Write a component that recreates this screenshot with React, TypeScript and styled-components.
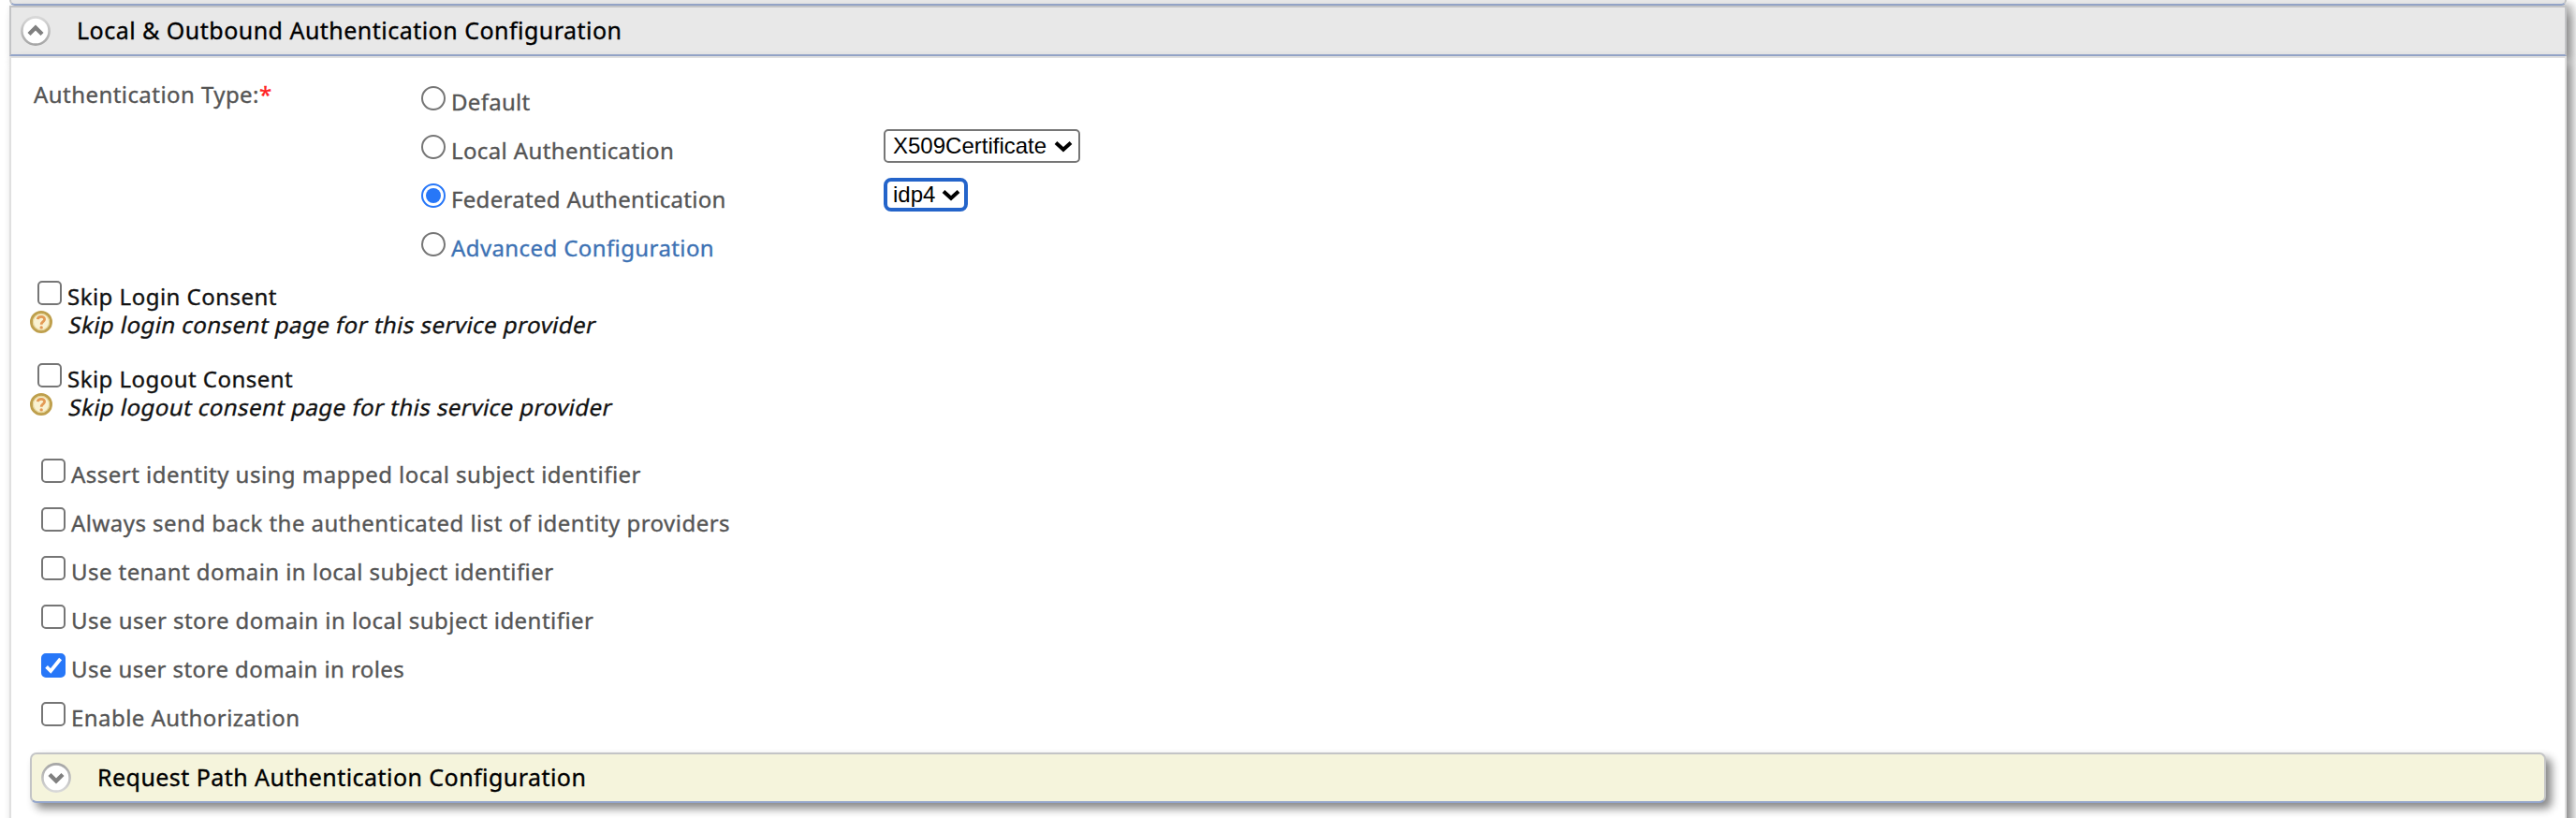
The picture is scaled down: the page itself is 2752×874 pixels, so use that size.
import React from 'react';
import styled, { createGlobalStyle, css } from 'styled-components';

const GlobalStyle = createGlobalStyle`
  * { box-sizing: border-box; }
  body { margin: 0; background: #fff; overflow: hidden; }
`;

const Page = styled.main`
  width: 2752px;
  height: 874px;
  padding: 0 10px;
  overflow: hidden;
  display: flex;
  flex-direction: column;
  font-family: 'Noto Sans', 'Open Sans', sans-serif;
  font-size: 24px;
  line-height: 32px;
  color: #555;
  -webkit-text-stroke: 0.35px currentColor;
`;

const PreviousPanelEdge = styled.div`
  flex: 0 0 6px;
  border: 2px solid #c3c4c6;
  border-top: 0;
  border-bottom-color: #94a6cc;
  border-radius: 0 0 6px 6px;
  background: #e8e8e8;
  box-shadow: 6px 6px 10px #888;
`;

const SectionHeader = styled.header<{ $nested?: boolean }>`
  position: relative;
  flex: none;
  display: flex;
  align-items: center;
  height: 54px;
  padding: 0 10px;
  border: 2px solid #c3c4c6;
  border-bottom-color: #94a6cc;
  background: #e8e8e8;
  box-shadow: 6px 6px 10px #888;
  ${(p) =>
    p.$nested &&
    css`
      width: 2688px;
      margin: 2px 0 0 20px;
      border-radius: 7px;
      background: #f5f4dc;
    `}
`;

const SectionTitle = styled.h2<{ $spacing: number }>`
  margin: 0 0 2px 28px;
  font-size: 25px;
  line-height: 34px;
  font-weight: 400;
  color: #000;
  white-space: nowrap;
  letter-spacing: ${(p) => p.$spacing}px;
`;

const PanelBody = styled.section`
  position: relative;
  flex: 0 0 860px;
  border: 2px solid #e0e0e0;
  background: #fff;
  box-shadow: 6px 6px 10px #888;
`;

const TypeRow = styled.div`
  display: flex;
  padding: 22px 0 0 24px;
`;

const TypeLabel = styled.div`
  width: 414px;
  padding-top: 1px;
  white-space: nowrap;
`;

const Required = styled.span`
  color: #f22;
`;

const TypeOptions = styled.div`
  display: flex;
  flex-direction: column;
  padding-top: 8px;
`;

const OptionRow = styled.div`
  display: flex;
  align-items: flex-start;
  height: 52px;
`;

const OptionChoice = styled.label`
  display: flex;
  width: 494px;
`;

const Radio = styled.span<{ $on?: boolean }>`
  flex: none;
  display: grid;
  place-items: center;
  width: 26px;
  height: 26px;
  margin-right: 6px;
  border: 2px solid ${(p) => (p.$on ? '#2777f8' : '#767676')};
  border-radius: 50%;
  &::after {
    content: '';
    width: 16px;
    height: 16px;
    border-radius: 50%;
    background: ${(p) => (p.$on ? '#2777f8' : 'transparent')};
  }
`;

const Text = styled.span<{ $spacing: number; $tone?: 'link' | 'strong' }>`
  white-space: nowrap;
  letter-spacing: ${(p) => p.$spacing}px;
  color: ${(p) => (p.$tone === 'link' ? '#3d72b4' : p.$tone === 'strong' ? '#111' : 'inherit')};
`;

const ControlText = styled(Text)`
  padding-top: 1px;
`;

const Slanted = styled(Text)`
  display: inline-block;
  transform: skewX(-12deg);
  transform-origin: 0 25px;
`;

const SelectBox = styled.div<{ $focused?: boolean }>`
  display: flex;
  align-items: center;
  justify-content: space-between;
  height: 36px;
  width: ${(p) => (p.$focused ? 90 : 210)}px;
  margin-top: -6px;
  padding: 0 ${(p) => (p.$focused ? '4px 0 6px' : '6px 0 8px')};
  border: ${(p) => (p.$focused ? '4px solid #2464ca' : '2px solid #767676')};
  border-radius: ${(p) => (p.$focused ? 8 : 5)}px;
  font: 24px/32px 'Liberation Sans', Arial, sans-serif;
  color: #000;
  -webkit-text-stroke: 0;
`;

const Consents = styled.div`
  display: flex;
  flex-direction: column;
  gap: 25px;
  padding-left: 20px;
`;

const ConsentItem = styled.div`
  height: 63px;
`;

const CheckRow = styled.label<{ $indent: number; $height: number }>`
  display: flex;
  align-items: flex-start;
  height: ${(p) => p.$height}px;
  padding-left: ${(p) => p.$indent}px;
`;

const HelpRow = styled.div`
  display: flex;
  align-items: flex-start;
`;

const Checkbox = styled.span<{ $on?: boolean }>`
  flex: none;
  width: 26px;
  height: 26px;
  margin-right: 6px;
  border: 2px solid ${(p) => (p.$on ? '#2777f8' : '#767676')};
  border-radius: 5px;
  background: ${(p) => (p.$on ? '#2777f8' : '#fff')};
  svg { display: block; }
`;

const CheckList = styled.div`
  display: flex;
  flex-direction: column;
  padding: 39px 0 0 32px;
`;

const HelpSvg = styled.svg`
  flex: none;
  margin: 1px 16px 0 0;
`;

function ToggleIcon({ up }: { up?: boolean }) {
  const id = up ? 'ring-up' : 'ring-down';
  return (
    <svg width="32" height="32" viewBox="0 0 32 32">
      <defs>
        <linearGradient id={id} x1="0" y1={up ? 0 : 1} x2="0" y2={up ? 1 : 0}>
          <stop offset="0" stopColor="#d8d8d8" />
          <stop offset="1" stopColor="#a6a6a6" />
        </linearGradient>
      </defs>
      <circle cx="16" cy="16" r="14.6" fill="#fff" stroke={`url(#${id})`} strokeWidth="2.6" />
      <path
        d={up ? 'M9 19.5 L16 12.5 L23 19.5' : 'M9 12.5 L16 19.5 L23 12.5'}
        fill="none"
        stroke="#808080"
        strokeWidth="4.4"
      />
    </svg>
  );
}

function HelpIcon() {
  return (
    <HelpSvg width="24" height="24" viewBox="0 0 24 24">
      <circle cx="12" cy="12" r="10.5" fill="#f9f2d2" stroke="#be9f4c" strokeWidth="3" />
      <circle cx="12" cy="12" r="8.6" fill="none" stroke="#e6d59a" strokeWidth="1.2" />
      <path
        d="M8.3 9.2 C8.6 5.4 15.8 5.4 15.6 9.2 C15.5 11.6 12.2 11.8 12.2 14.8"
        fill="none"
        stroke="#e39a55"
        strokeWidth="2.8"
      />
      <circle cx="12.2" cy="17.9" r="1.7" fill="#e39a55" />
    </HelpSvg>
  );
}

function Chevron() {
  return (
    <svg width="20" height="14" viewBox="0 0 20 14">
      <path d="M2 3.5 L10 10.8 L18 3.5" fill="none" stroke="#000" strokeWidth="4" />
    </svg>
  );
}

function Check({ on }: { on?: boolean }) {
  return (
    <Checkbox $on={on}>
      {on && (
        <svg width="22" height="22" viewBox="0 0 22 22">
          <path d="M3.6 12.3 L8.2 17 L18.6 4" fill="none" stroke="#fff" strokeWidth="3.8" />
        </svg>
      )}
    </Checkbox>
  );
}

const consents = [
  { label: 'Skip Login Consent', spacing: 0.48, help: 'Skip login consent page for this service provider', helpSpacing: 0.47 },
  { label: 'Skip Logout Consent', spacing: 0.46, help: 'Skip logout consent page for this service provider', helpSpacing: 0.47 },
];

const options = [
  { label: 'Assert identity using mapped local subject identifier', spacing: 0.476 },
  { label: 'Always send back the authenticated list of identity providers', spacing: 0.469 },
  { label: 'Use tenant domain in local subject identifier', spacing: 0.43 },
  { label: 'Use user store domain in local subject identifier', spacing: 0.46 },
  { label: 'Use user store domain in roles', spacing: 0.42, on: true },
  { label: 'Enable Authorization', spacing: 0.44 },
];

export default function App() {
  return (
    <Page>
      <GlobalStyle />
      <PreviousPanelEdge />
      <SectionHeader>
        <ToggleIcon up />
        <SectionTitle $spacing={0.48}>Local &amp; Outbound Authentication Configuration</SectionTitle>
      </SectionHeader>
      <PanelBody>
        <TypeRow>
          <TypeLabel>
            <Text $spacing={0.44}>Authentication Type:</Text>
            <Required>*</Required>
          </TypeLabel>
          <TypeOptions>
            <OptionRow>
              <OptionChoice>
                <Radio />
                <ControlText $spacing={0.3}>Default</ControlText>
              </OptionChoice>
            </OptionRow>
            <OptionRow>
              <OptionChoice>
                <Radio />
                <ControlText $spacing={0.38}>Local Authentication</ControlText>
              </OptionChoice>
              <SelectBox>
                X509Certificate
                <Chevron />
              </SelectBox>
            </OptionRow>
            <OptionRow>
              <OptionChoice>
                <Radio $on />
                <ControlText $spacing={0.3}>Federated Authentication</ControlText>
              </OptionChoice>
              <SelectBox $focused>
                idp4
                <Chevron />
              </SelectBox>
            </OptionRow>
            <OptionRow>
              <OptionChoice>
                <Radio />
                <ControlText $spacing={0.4} $tone="link">Advanced Configuration</ControlText>
              </OptionChoice>
            </OptionRow>
          </TypeOptions>
        </TypeRow>
        <Consents>
          {consents.map((c) => (
            <ConsentItem key={c.label}>
              <CheckRow $indent={8} $height={31}>
                <Check />
                <ControlText $spacing={c.spacing} $tone="strong">{c.label}</ControlText>
              </CheckRow>
              <HelpRow>
                <HelpIcon />
                <Slanted $spacing={c.helpSpacing} $tone="strong">{c.help}</Slanted>
              </HelpRow>
            </ConsentItem>
          ))}
        </Consents>
        <CheckList>
          {options.map((o) => (
            <CheckRow key={o.label} $indent={0} $height={52}>
              <Check on={o.on} />
              <ControlText $spacing={o.spacing}>{o.label}</ControlText>
            </CheckRow>
          ))}
        </CheckList>
        <SectionHeader $nested>
          <ToggleIcon />
          <SectionTitle $spacing={0.45}>Request Path Authentication Configuration</SectionTitle>
        </SectionHeader>
      </PanelBody>
    </Page>
  );
}
